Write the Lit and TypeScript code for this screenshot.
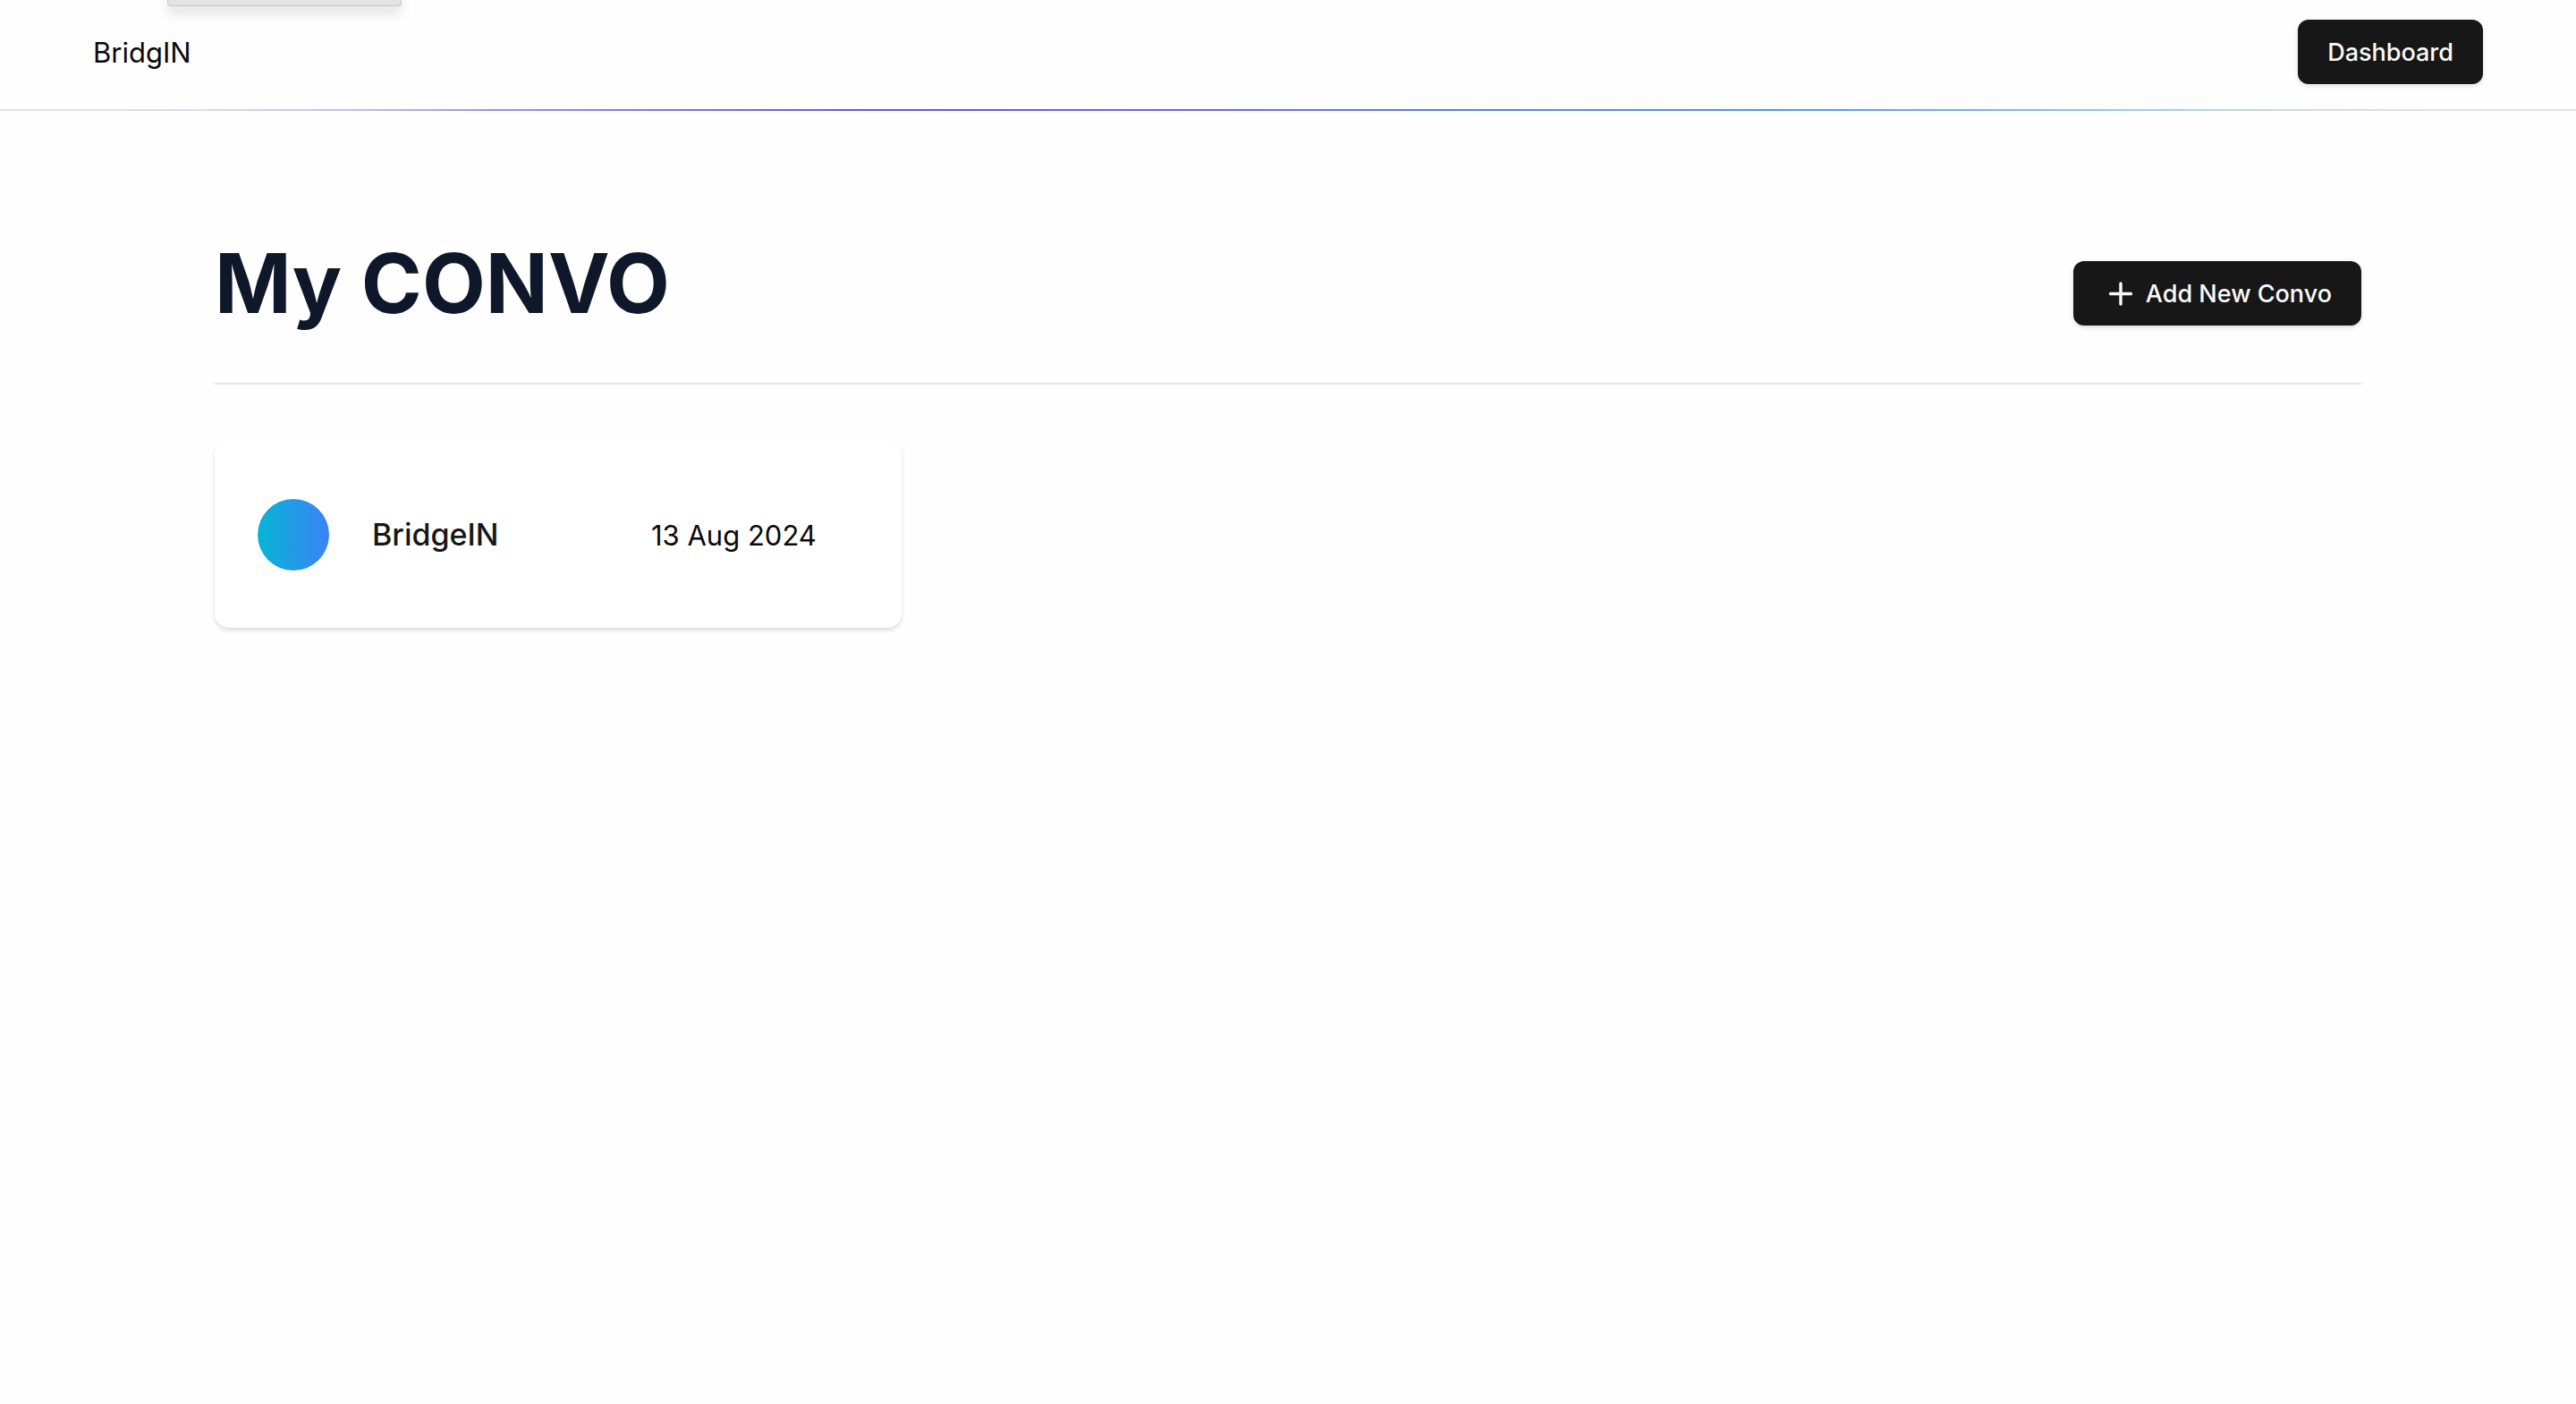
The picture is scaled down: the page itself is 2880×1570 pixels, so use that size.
import { LitElement, html, css } from "lit";
import { customElement, property } from "lit/decorators.js";

interface Convo {
  name: string;
  date: string;
}

const buttonStyles = css`
  .button {
    display: inline-flex;
    align-items: center;
    justify-content: center;
    gap: 8px;
    height: 72px;
    padding: 2px 33px 0;
    box-sizing: border-box;
    border: 0;
    border-radius: 12px;
    background: #171717;
    color: #fafafa;
    font: 500 27px/40px Inter, "Liberation Sans", sans-serif;
    text-decoration: none;
    white-space: nowrap;
    box-shadow: 0 2px 6px rgb(0 0 0 / 0.1), 0 2px 4px -2px rgb(0 0 0 / 0.1);
    cursor: pointer;
  }
  .button svg {
    width: 40px;
    height: 40px;
  }
`;

@customElement("site-header")
class SiteHeader extends LitElement {
  static styles = [
    buttonStyles,
    css`
      :host {
        display: block;
      }
      .bar {
        position: relative;
        display: flex;
        align-items: center;
        justify-content: space-between;
        padding: 22px 104px 28px;
      }
      .brand {
        padding-top: 2px;
        color: #0a0a0a;
        font-size: 31px;
        line-height: 48px;
        text-decoration: none;
      }
      .divider {
        height: 2px;
        background: linear-gradient(
          90deg,
          #e2e2e2 4%,
          #dcd8ec 8%,
          #ccb8e4 14%,
          #a48ee6 19%,
          #8b74e0 25%,
          #6856dc 34%,
          #6a70de 50%,
          #5c86e2 60%,
          #5596ea 69%,
          #74aeeb 76%,
          #a6cfe2 84%,
          #cadce4 89%,
          #e2e2e2 95%
        );
      }
      .tab {
        position: absolute;
        top: 0;
        left: 187px;
        width: 262px;
        height: 7px;
        box-sizing: border-box;
        border: 1px solid #c9c5c5;
        border-top: 0;
        border-radius: 0 0 4px 4px;
        background: #e6e2e3;
        box-shadow: 0 6px 14px rgb(0 0 0 / 0.2);
      }
    `,
  ];

  render() {
    return html`
      <header>
        <div class="bar">
          <div class="tab"></div>
          <a class="brand" href="#">BridgIN</a>
          <a class="button" href="#dashboard">Dashboard</a>
        </div>
        <div class="divider"></div>
      </header>
    `;
  }
}

@customElement("convo-card")
class ConvoCard extends LitElement {
  @property({ attribute: false }) convo!: Convo;

  static styles = css`
    :host {
      display: block;
    }
    .card {
      display: grid;
      grid-template-columns: 80px 264px 1fr;
      align-items: center;
      column-gap: 48px;
      padding: 66px 48px 64px;
      border-radius: 16px;
      background: #fff;
      color: #0a0a0a;
      text-decoration: none;
      box-shadow: 0 3px 5px rgb(0 0 0 / 0.13);
    }
    .avatar {
      width: 80px;
      height: 80px;
      border-radius: 50%;
      background: linear-gradient(90deg, #06b6d4, #3b82f6);
    }
    .name {
      margin: 0;
      color: #171717;
      font-size: 34px;
      font-weight: 500;
      line-height: 56px;
    }
    .date {
      padding-top: 2px;
      font-size: 31px;
      line-height: 48px;
    }
  `;

  render() {
    return html`
      <a class="card" href="#convo">
        <span class="avatar"></span>
        <h2 class="name">${this.convo.name}</h2>
        <time class="date">${this.convo.date}</time>
      </a>
    `;
  }
}

@customElement("app-root")
class AppRoot extends LitElement {
  @property({ attribute: false }) convos: Convo[] = [
    { name: "BridgeIN", date: "13 Aug 2024" },
  ];

  static styles = [
    buttonStyles,
    css`
      :host {
        display: block;
        min-height: 100vh;
        background: #fefefe;
        color: #0a0a0a;
        font-family: Inter, "Liberation Sans", sans-serif;
      }
      .page {
        max-width: 2400px;
        margin: 0 auto;
        padding: 146px 48px 0;
      }
      .title-row {
        display: flex;
        align-items: flex-end;
        justify-content: space-between;
        padding-bottom: 64px;
        border-bottom: 2px solid #e5e5e5;
      }
      .title {
        margin: 0;
        color: #0f172a;
        font-size: 92px;
        font-weight: 700;
        line-height: 94px;
      }
      .list {
        display: grid;
        grid-template-columns: repeat(3, 1fr);
        gap: 48px;
        margin: 0;
        padding: 62px 0 0;
        list-style: none;
      }
    `,
  ];

  render() {
    return html`
      <site-header></site-header>
      <main class="page">
        <div class="title-row">
          <h1 class="title">My CONVO</h1>
          <button class="button" type="button">
            <svg viewBox="0 0 40 40" fill="none" stroke="currentColor" stroke-width="3.4" stroke-linecap="round" aria-hidden="true">
              <path d="M20 8v23M8.5 19.5h23" />
            </svg>
            Add New Convo
          </button>
        </div>
        <ul class="list">
          ${this.convos.map((convo) => html`<li><convo-card .convo=${convo}></convo-card></li>`)}
        </ul>
      </main>
    `;
  }
}
